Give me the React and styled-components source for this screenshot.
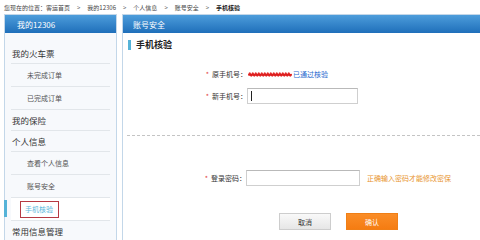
import React from 'react';
import styled, { createGlobalStyle } from 'styled-components';

const GlobalStyle = createGlobalStyle`
  html, body { margin: 0; padding: 0; background: #fff; }
  body { font-family: "Noto Sans CJK SC", "Noto Sans", sans-serif; color: #333; }
  #root { width: 480px; height: 240px; overflow: hidden; }
`;

const Page = styled.div`
  width: 480px;
  height: 240px;
  display: flex;
  flex-direction: column;
  overflow: hidden;
  background: #fff;
`;

const Breadcrumb = styled.div`
  height: 14px;
  flex-shrink: 0;
  display: flex;
  align-items: center;
  padding-left: 4px;
  font-size: 6px;
  color: #444;
  white-space: nowrap;
`;

const Crumb = styled.span`
  font-weight: ${(p) => (p.$current ? 700 : 400)};
  color: ${(p) => (p.$current ? '#1a1a1a' : '#444')};
`;

const Sep = styled.span`
  margin: 0 7px;
  color: #555;
`;

const Main = styled.div`
  flex: 1;
  display: flex;
  gap: 5px;
  padding-left: 4px;
  min-height: 0;
`;

const Sidebar = styled.aside`
  width: 113px;
  flex-shrink: 0;
  box-sizing: border-box;
  border: 1px solid #c3d7e9;
  border-bottom: none;
  background: #f7f9fc;
  display: flex;
  flex-direction: column;
`;

const BlueHeader = styled.div`
  height: 18px;
  flex-shrink: 0;
  background: linear-gradient(#4d9ddb, #1f6fba);
  color: #fff;
  font-size: 8px;
  display: flex;
  align-items: center;
  padding-left: ${(p) => p.$indent}px;
`;

const Nav = styled.nav`
  display: flex;
  flex-direction: column;
  padding-top: 10px;
`;

const NavItem = styled.div`
  position: relative;
  margin: 0 6px;
  height: ${(p) => (p.$sub ? 23 : 21)}px;
  box-sizing: border-box;
  border-bottom: 1px solid #e2e6ea;
  display: flex;
  align-items: center;
  padding-left: ${(p) => (p.$active ? 9 : p.$sub ? 16 : 1)}px;
  font-size: ${(p) => (p.$sub ? 7 : 8.5)}px;
  color: ${(p) => (p.$sub ? '#555' : '#333')};
  background: ${(p) => (p.$active ? '#fff' : 'transparent')};

  &::before {
    content: '';
    display: ${(p) => (p.$active ? 'block' : 'none')};
    position: absolute;
    left: -7px;
    top: 2px;
    bottom: 3px;
    width: 3px;
    background: #55b3d8;
  }
`;

const ActiveBox = styled.span`
  border: 1px solid #b63a43;
  padding: 4px 5px 4px 4px;
  line-height: 7px;
  color: #5bb8dc;
`;

const Content = styled.section`
  flex: 1;
  box-sizing: border-box;
  border-left: 1px solid #c3d7e9;
  border-top: 1px solid #c3d7e9;
  display: flex;
  flex-direction: column;
  min-width: 0;
`;

const SectionTitle = styled.h3`
  margin: 7px 0 0 5px;
  height: 10px;
  border-left: 3px solid #55b3d8;
  padding-left: 5px;
  font-size: 9px;
  line-height: 10px;
  font-weight: 700;
  color: #222;
`;

const Row = styled.div`
  display: flex;
  align-items: center;
  height: ${(p) => p.$h}px;
  margin-top: ${(p) => p.$mt}px;
`;

const Label = styled.label`
  width: ${(p) => p.$w}px;
  flex-shrink: 0;
  text-align: right;
  font-size: 7px;
  color: #333;
  white-space: nowrap;
`;

const Star = styled.span`
  color: #e23a3a;
  margin-right: 3px;
`;

const Scribble = styled.svg`
  width: 46px;
  height: 7px;
  display: block;
`;

const Link = styled.a`
  font-size: 7px;
  color: #2b6ccf;
  text-decoration: none;
`;

const Field = styled.div`
  width: ${(p) => p.$w}px;
  height: 16px;
  box-sizing: border-box;
  border: 1px solid #cfcfcf;
  border-top-color: #b9b9b9;
  background: #fff;
  display: flex;
  align-items: center;
`;

const Caret = styled.span`
  width: 1px;
  height: 10px;
  margin-left: 3px;
  background: #222;
`;

const Hint = styled.span`
  margin-left: 7px;
  font-size: 7px;
  color: #e8952e;
  white-space: nowrap;
`;

const Divider = styled.hr`
  margin: 31px 0 0 4px;
  border: none;
  border-top: 1px dashed #c4c4c4;
  height: 0;
`;

const Buttons = styled.div`
  display: flex;
  gap: 15px;
  margin-top: 27px;
  padding-left: 156px;
`;

const Button = styled.button`
  width: 52px;
  height: 17px;
  box-sizing: border-box;
  padding: 0;
  font-family: inherit;
  font-size: 7px;
  cursor: pointer;
  border: 1px solid ${(p) => (p.$primary ? '#f07f16' : '#cdcdcd')};
  background: ${(p) => (p.$primary ? 'linear-gradient(#fa8d27, #f57c12)' : 'linear-gradient(#f9f9f9, #e6e6e6)')};
  color: ${(p) => (p.$primary ? '#fff' : '#333')};
`;

const navItems = [
  { label: '我的火车票' },
  { label: '未完成订单', sub: true },
  { label: '已完成订单', sub: true },
  { label: '我的保险' },
  { label: '个人信息' },
  { label: '查看个人信息', sub: true },
  { label: '账号安全', sub: true },
  { label: '手机核验', sub: true, active: true },
  { label: '常用信息管理' },
];

const scribblePath = (() => {
  let d = 'M2 3.5';
  for (let x = 2; x < 43; x += 3) {
    d += ` Q${x + 0.75} 0.5 ${x + 1.5} 3.5 T${x + 3} 3.5`;
  }
  return d;
})();

export default function App() {
  return (
    <Page>
      <GlobalStyle />
      <Breadcrumb>
        <Crumb>您现在的位置：客运首页</Crumb>
        <Sep>&gt;</Sep>
        <Crumb>我的12306</Crumb>
        <Sep>&gt;</Sep>
        <Crumb>个人信息</Crumb>
        <Sep>&gt;</Sep>
        <Crumb>账号安全</Crumb>
        <Sep>&gt;</Sep>
        <Crumb $current>手机核验</Crumb>
      </Breadcrumb>
      <Main>
        <Sidebar>
          <BlueHeader $indent={12}>我的12306</BlueHeader>
          <Nav>
            {navItems.map((it) => (
              <NavItem key={it.label} $sub={it.sub} $active={it.active}>
                {it.active ? <ActiveBox>{it.label}</ActiveBox> : it.label}
              </NavItem>
            ))}
          </Nav>
        </Sidebar>
        <Content>
          <BlueHeader $indent={10}>账号安全</BlueHeader>
          <SectionTitle>手机核验</SectionTitle>
          <Row $h={14} $mt={17}>
            <Label $w={124}><Star>*</Star>原手机号：</Label>
            <Scribble viewBox="0 0 46 7">
              <path
                d={scribblePath}
                fill="none"
                stroke="#e42a2a"
                strokeWidth="1.6"
                strokeLinecap="round"
              />
              <path d="M2 3.8 L44 3.8" stroke="#dd1f1f" strokeWidth="1.8" strokeLinecap="round" />
            </Scribble>
            <Link href="#">已通过核验</Link>
          </Row>
          <Row $h={16} $mt={7}>
            <Label $w={124}><Star>*</Star>新手机号：</Label>
            <Field $w={111}><Caret /></Field>
          </Row>
          <Divider />
          <Row $h={16} $mt={34}>
            <Label $w={123}><Star>*</Star>登录密码：</Label>
            <Field $w={114} />
            <Hint>正确输入密码才能修改密保</Hint>
          </Row>
          <Buttons>
            <Button>取消</Button>
            <Button $primary>确认</Button>
          </Buttons>
        </Content>
      </Main>
    </Page>
  );
}
